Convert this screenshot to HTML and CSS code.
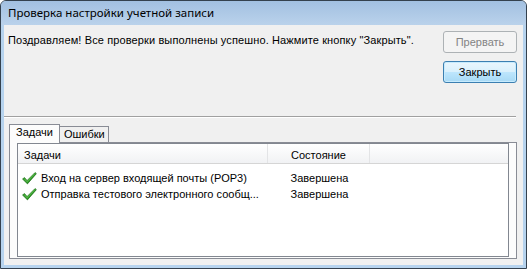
FILE: index.html
```html
<!DOCTYPE html>
<html lang="ru">
<head>
  <meta charset="UTF-8" />
  <title>Проверка настройки учетной записи</title>
  <link rel="stylesheet" href="styles.css">
</head>
<body>
  <div class="window">
    <div class="titlebar">Проверка настройки учетной записи</div>

    <div class="client">
      <div class="top">
        <p class="message">Поздравляем! Все проверки выполнены успешно. Нажмите кнопку "Закрыть".</p>
        <div class="buttons">
          <button class="btn" disabled>Прервать</button>
          <button class="btn default">Закрыть</button>
        </div>
      </div>

      <div class="separator"></div>

      <div class="tabs">
        <div class="tab active">Задачи</div>
        <div class="tab">Ошибки</div>
      </div>

      <div class="page">
        <div class="listview">
          <div class="lv-header">
            <div class="col col-task">Задачи</div>
            <div class="col col-state">Состояние</div>
          </div>
          <div class="lv-rows">
            <div class="lv-row">
              <div class="col col-task">
                <svg class="check" viewBox="0 0 16 14" width="16" height="14">
                  <path d="M0.5 7.6 L2.6 6 L5.4 9.2 L14 0.6 L15.4 1.8 L5.8 12.8 Z" fill="#2f9a27" stroke="#1b6a15" stroke-width="0.7" stroke-linejoin="round"/>
                  <path d="M2.4 7.2 L5.4 10.4 L13.6 1.8" fill="none" stroke="#7fd86a" stroke-width="0.7"/>
                </svg>
                <span>Вход на сервер входящей почты (POP3)</span>
              </div>
              <div class="col col-state">Завершена</div>
            </div>
            <div class="lv-row">
              <div class="col col-task">
                <svg class="check" viewBox="0 0 16 14" width="16" height="14">
                  <path d="M0.5 7.6 L2.6 6 L5.4 9.2 L14 0.6 L15.4 1.8 L5.8 12.8 Z" fill="#2f9a27" stroke="#1b6a15" stroke-width="0.7" stroke-linejoin="round"/>
                  <path d="M2.4 7.2 L5.4 10.4 L13.6 1.8" fill="none" stroke="#7fd86a" stroke-width="0.7"/>
                </svg>
                <span>Отправка тестового электронного сообщ...</span>
              </div>
              <div class="col col-state">Завершена</div>
            </div>
          </div>
        </div>
      </div>
    </div>
  </div>
</body>
</html>
```

FILE: styles.css
```css
/* Windows 7 style dialog */
body {
  margin: 0;
  font-family: 'Liberation Sans', Arial, sans-serif;
  font-size: 11px;
  color: #000;
}

.window {
  width: 527px;
  height: 269px;
  box-sizing: border-box;
  border: 1px solid #34414e;
  border-radius: 6px 6px 0 0;
  background-color: #b6d3ee;
  display: flex;
  flex-direction: column;
  overflow: hidden;
}

.titlebar {
  height: 24px;
  line-height: 24px;
  padding-left: 7px;
  background: linear-gradient(#a2c0e1, #bad2eb);
  font-family: 'Noto Sans', 'Open Sans', sans-serif;
  font-size: 11.5px;
  color: #000;
}

.client {
  flex: 1;
  margin: 0 3px 3px;
  background-color: #f0f0f0;
  display: flex;
  flex-direction: column;
}

.top {
  height: 91px;
  box-sizing: border-box;
  padding: 6px 6px 0 4px;
  display: flex;
}

.message {
  flex: 1;
  margin: 0;
  padding-top: 3px;
  line-height: 13px;
  letter-spacing: 0.12px;
}

.buttons {
  display: flex;
  flex-direction: column;
  gap: 8px;
}

.btn {
  width: 74px;
  height: 22px;
  padding: 0;
  font-family: inherit;
  font-size: 11px;
  color: #000;
  border: 1px solid #707070;
  border-radius: 3px;
  background: linear-gradient(#f2f2f2 0%, #ebebeb 50%, #dddddd 50%, #cfcfcf 100%);
}

.btn:disabled {
  color: #838383;
  border-color: #adb2b5;
  background: #f4f4f4;
}

.btn.default {
  border-color: #3c7fb1;
  background: linear-gradient(#eaf6fd 0%, #d9f0fc 50%, #bee6fd 50%, #a7d9f5 100%);
  box-shadow: inset 0 0 0 1px #c7ebfd;
}

.separator {
  margin-right: 7px;
  border-top: 1px solid #a0a0a0;
  border-bottom: 1px solid #ffffff;
}

.tabs {
  height: 18px;
  margin: 6px 0 0 5px;
  display: flex;
  align-items: flex-end;
  position: relative;
  z-index: 1;
}

.tab {
  height: 16px;
  box-sizing: border-box;
  padding: 0 3px 0 4px;
  line-height: 14px;
  border: 1px solid #898c95;
  border-bottom: none;
  background-color: #f0f0f0;
}

.tab + .tab {
  border-left: none;
}

.tab.active {
  height: 19px;
  margin-bottom: -1px;
  padding: 0 6px;
  line-height: 15px;
  background-color: #fcfcfc;
}

.page {
  flex: 1;
  margin: 0 6px 6px 5px;
  padding: 0 7px 1px;
  border: 1px solid #898c95;
  background-color: #fcfcfc;
  display: flex;
  flex-direction: column;
}

.listview {
  flex: 1;
  border: 1px solid #828790;
  background-color: #fff;
}

.lv-header {
  height: 20px;
  box-sizing: border-box;
  display: flex;
  border-bottom: 1px solid #d5d5d5;
  background: linear-gradient(#ffffff, #f1f2f4);
}

.lv-header .col {
  padding-top: 4px;
  line-height: 15px;
  border-right: 1px solid #e3e4e6;
}

.col-task {
  width: 250px;
  box-sizing: border-box;
  padding-left: 6px;
  white-space: nowrap;
  overflow: hidden;
}

.col-state {
  width: 101px;
  text-align: center;
}

.lv-rows {
  padding-top: 6px;
}

.lv-row {
  height: 16px;
  display: flex;
  align-items: center;
}

.lv-row .col-task {
  padding-left: 4px;
  display: flex;
  align-items: center;
}

.lv-row .col-state {
  margin-left: 1px;
}

.check {
  width: 15px;
  height: 13px;
  margin-right: 4px;
  flex: none;
}
```
